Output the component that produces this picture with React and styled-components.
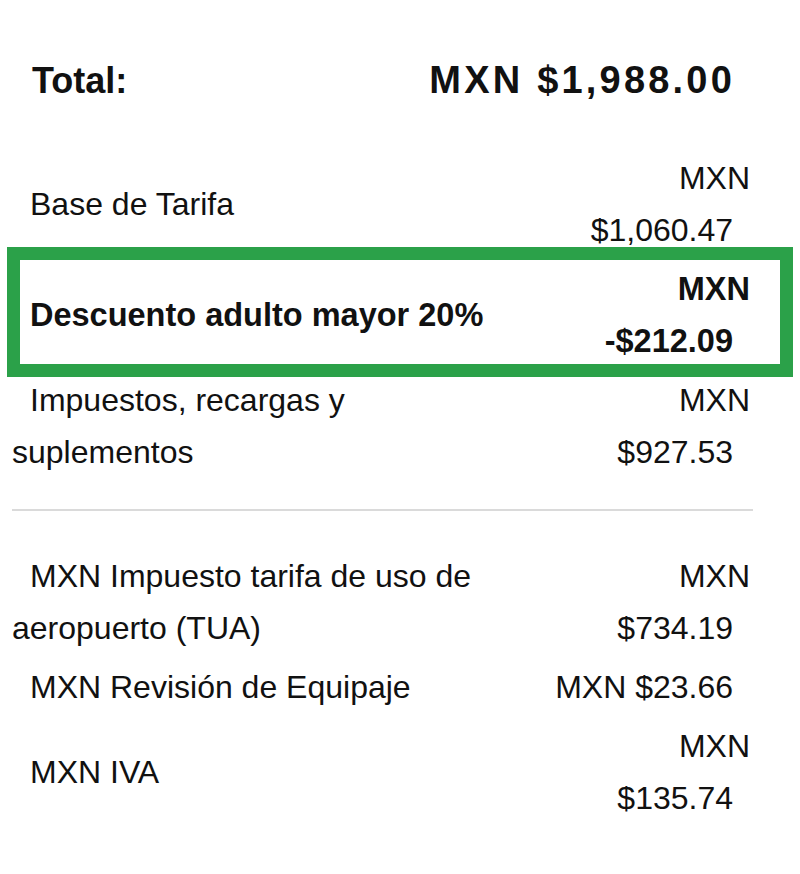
import React from "react";
import styled, { createGlobalStyle } from "styled-components";

const GlobalStyle = createGlobalStyle`
  html, body {
    margin: 0;
    padding: 0;
    background: #ffffff;
  }
  body {
    font-family: "Liberation Sans", Arial, Helvetica, sans-serif;
    color: #111111;
  }
`;

const Summary = styled.div`
  width: 738px;
  padding: 58px 0 40px 12px;
`;

const TotalRow = styled.div`
  display: flex;
  align-items: baseline;
  justify-content: space-between;
  height: 44px;
  line-height: 44px;
  font-weight: bold;
  margin-bottom: 47px;
`;

const TotalLabel = styled.span`
  font-size: 36px;
  padding-left: 20px;
`;

const TotalAmount = styled.span`
  font-size: 38px;
  letter-spacing: 3.2px;
  padding-right: 15px;
`;

const Breakdown = styled.div`
  display: flex;
  flex-direction: column;
  gap: 1px;
`;

const Row = styled.div`
  position: relative;
  display: flex;
  align-items: center;
  gap: 50px;
  padding: 3px 0;
  line-height: 52px;
  font-size: ${(p) => (p.$bold ? "32.5px" : "32px")};
  font-weight: ${(p) => (p.$bold ? "bold" : "normal")};

  ${(p) =>
    p.$highlight &&
    `
    &::after {
      content: "";
      position: absolute;
      top: -13px;
      bottom: -7px;
      left: -5px;
      right: -43px;
      border: 13px solid #2ba149;
      pointer-events: none;
    }
  `}
`;

const Label = styled.div`
  flex: 1;
  min-width: 0;
`;

const Amount = styled.div`
  flex: 0 0 202px;
  text-align: right;
`;

const LabelText = styled.span`
  padding-left: 18px;
`;

const AmountText = styled.span`
  padding-right: 17px;
`;

const Divider = styled.hr`
  border: none;
  border-top: 2px solid #dadada;
  margin: 28px -3px 36px 0;
`;

const fareItems = [
  { id: "base", label: "Base de Tarifa", amount: "MXN $1,060.47" },
  {
    id: "discount",
    label: "Descuento adulto mayor 20%",
    amount: "MXN -$212.09",
    bold: true,
    highlight: true,
  },
  { id: "taxes", label: "Impuestos, recargas y suplementos", amount: "MXN $927.53" },
];

const taxItems = [
  { id: "tua", label: "MXN Impuesto tarifa de uso de aeropuerto (TUA)", amount: "MXN $734.19" },
  { id: "bags", label: "MXN Revisión de Equipaje", amount: "MXN $23.66" },
  { id: "iva", label: "MXN IVA", amount: "MXN $135.74" },
];

function FareRow({ item }) {
  return (
    <Row $bold={item.bold} $highlight={item.highlight}>
      <Label>
        <LabelText>{item.label}</LabelText>
      </Label>
      <Amount>
        <AmountText>{item.amount}</AmountText>
      </Amount>
    </Row>
  );
}

export default function App() {
  return (
    <>
      <GlobalStyle />
      <Summary>
        <TotalRow>
          <TotalLabel>Total:</TotalLabel>
          <TotalAmount>MXN $1,988.00</TotalAmount>
        </TotalRow>
        <Breakdown>
          {fareItems.map((item) => (
            <FareRow key={item.id} item={item} />
          ))}
        </Breakdown>
        <Divider />
        <Breakdown>
          {taxItems.map((item) => (
            <FareRow key={item.id} item={item} />
          ))}
        </Breakdown>
      </Summary>
    </>
  );
}
